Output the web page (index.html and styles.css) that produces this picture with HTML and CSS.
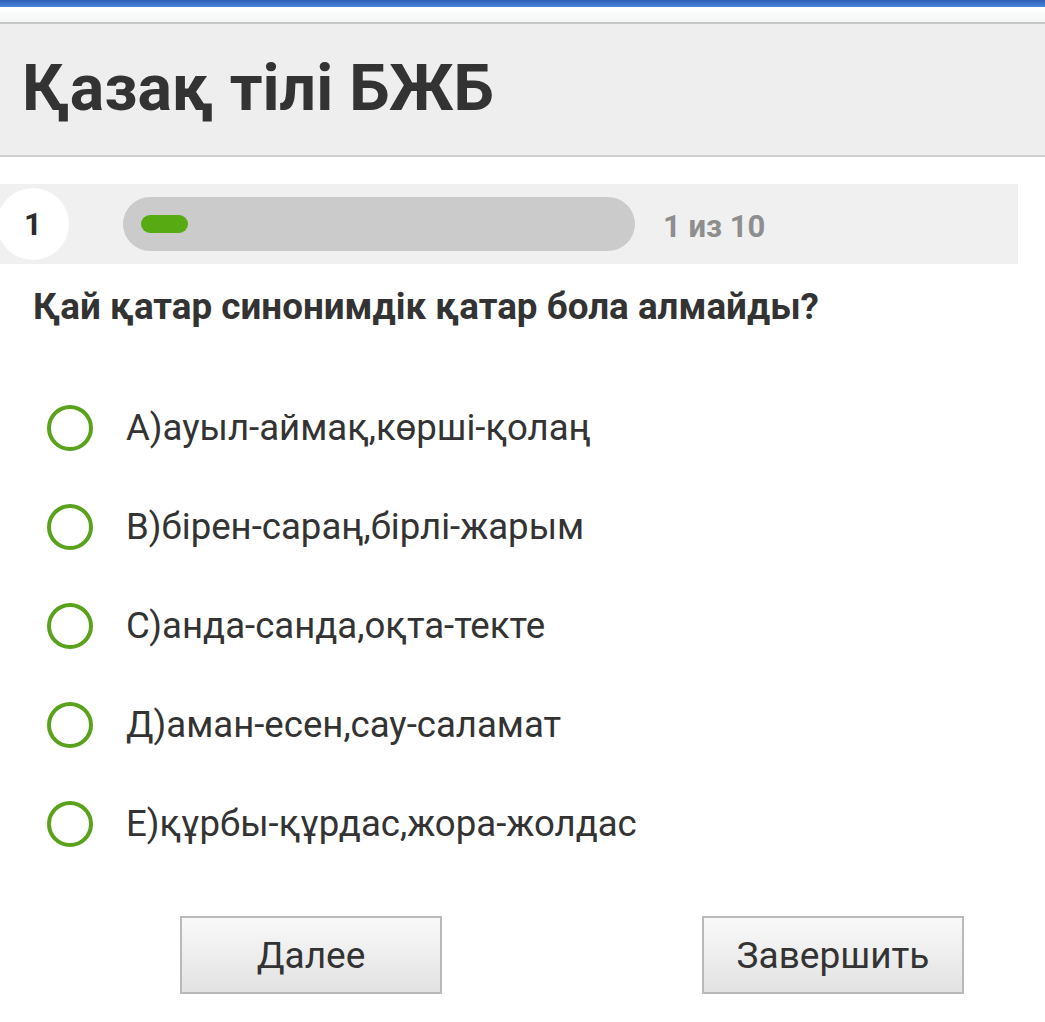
FILE: index.html
```html
<!DOCTYPE html>
<html lang="kk">
<head>
<meta charset="utf-8">
<title>Қазақ тілі БЖБ</title>
<link rel="stylesheet" href="styles.css">
</head>
<body>
<div class="topbar"></div>
<div class="strip"></div>
<header class="header">
  <h1 class="title">Қазақ тілі БЖБ</h1>
</header>
<main class="quiz">
  <div class="progress-row">
    <div class="num">1</div>
    <div class="track"><div class="fill"></div></div>
    <div class="count">1 из 10</div>
  </div>
  <h2 class="question">Қай қатар синонимдік қатар бола алмайды?</h2>
  <ul class="options">
    <li class="option"><span class="radio"></span><span class="label">А)ауыл-аймақ,көрші-қолаң</span></li>
    <li class="option"><span class="radio"></span><span class="label">В)бірен-сараң,бірлі-жарым</span></li>
    <li class="option"><span class="radio"></span><span class="label">С)анда-санда,оқта-текте</span></li>
    <li class="option"><span class="radio"></span><span class="label">Д)аман-есен,сау-саламат</span></li>
    <li class="option"><span class="radio"></span><span class="label">Е)құрбы-құрдас,жора-жолдас</span></li>
  </ul>
  <div class="actions">
    <button class="btn btn-next">Далее</button>
    <button class="btn btn-finish">Завершить</button>
  </div>
</main>
</body>
</html>
```
FILE: styles.css
```css
* { box-sizing: border-box; }
html, body { margin: 0; padding: 0; background: #ffffff; }
body {
  font-family: Roboto, "Noto Sans", "Liberation Sans", sans-serif;
  color: #333333;
  width: 1045px;
  height: 1022px;
  overflow: hidden;
}
.topbar {
  height: 7px;
  background: linear-gradient(#2f5db5, #4a86dd);
}
.strip {
  height: 15px;
  background: linear-gradient(#ffffff, #f3f6f6);
  border-bottom: 2px solid #c6c6c6;
  box-sizing: content-box;
}
.header {
  height: 133px;
  background: #eeeeee;
  border-bottom: 2px solid #cfcfcf;
  display: flex;
  align-items: center;
  padding-left: 22px;
}
.title {
  margin: 0;
  font-size: 64.4px;
  font-weight: 700;
  color: #333333;
  line-height: 1;
  padding-bottom: 2px;
}
.quiz { padding-top: 27px; }
.progress-row {
  width: 1018px;
  height: 80px;
  background: #f0f0f0;
  display: flex;
  align-items: center;
}
.num {
  width: 72px;
  height: 72px;
  border-radius: 50%;
  background: #ffffff;
  margin-left: -3px;
  display: flex;
  align-items: center;
  justify-content: center;
  font-size: 31px;
  font-weight: 700;
  color: #2b2b2b;
}
.track {
  margin-left: 54px;
  width: 512px;
  height: 54px;
  border-radius: 27px;
  background: #cbcbcb;
  display: flex;
  align-items: center;
  padding-left: 18px;
}
.fill {
  width: 47px;
  height: 18px;
  border-radius: 9px;
  background: #58aa12;
}
.count {
  margin-left: 28px;
  font-size: 31px;
  font-weight: 700;
  color: #8e8e8e;
  padding-top: 4px;
}
.question {
  margin: 23px 0 0 33px;
  font-size: 36.8px;
  font-weight: 700;
  color: #333333;
  line-height: 40px;
}
.options {
  list-style: none;
  margin: 78px 0 0 0;
  padding: 0 0 0 47px;
  display: flex;
  flex-direction: column;
  gap: 53px;
}
.option {
  display: flex;
  align-items: center;
  height: 46px;
}
.radio {
  width: 46px;
  height: 46px;
  border-radius: 50%;
  border: 4px solid #5aa11c;
  flex: none;
}
.label {
  margin-left: 33px;
  font-size: 36.6px;
  color: #333333;
  line-height: 46px;
}
.actions {
  display: flex;
  margin-top: 69px;
  padding-left: 180px;
}
.btn {
  width: 262px;
  height: 78px;
  border: 2px solid #b9b9b9;
  background: linear-gradient(#f9f9f9, #e2e2e2);
  font-family: Roboto, "Noto Sans", "Liberation Sans", sans-serif;
  font-size: 37px;
  color: #333333;
  padding: 0;
}
.btn-finish { margin-left: 260px; }
```
